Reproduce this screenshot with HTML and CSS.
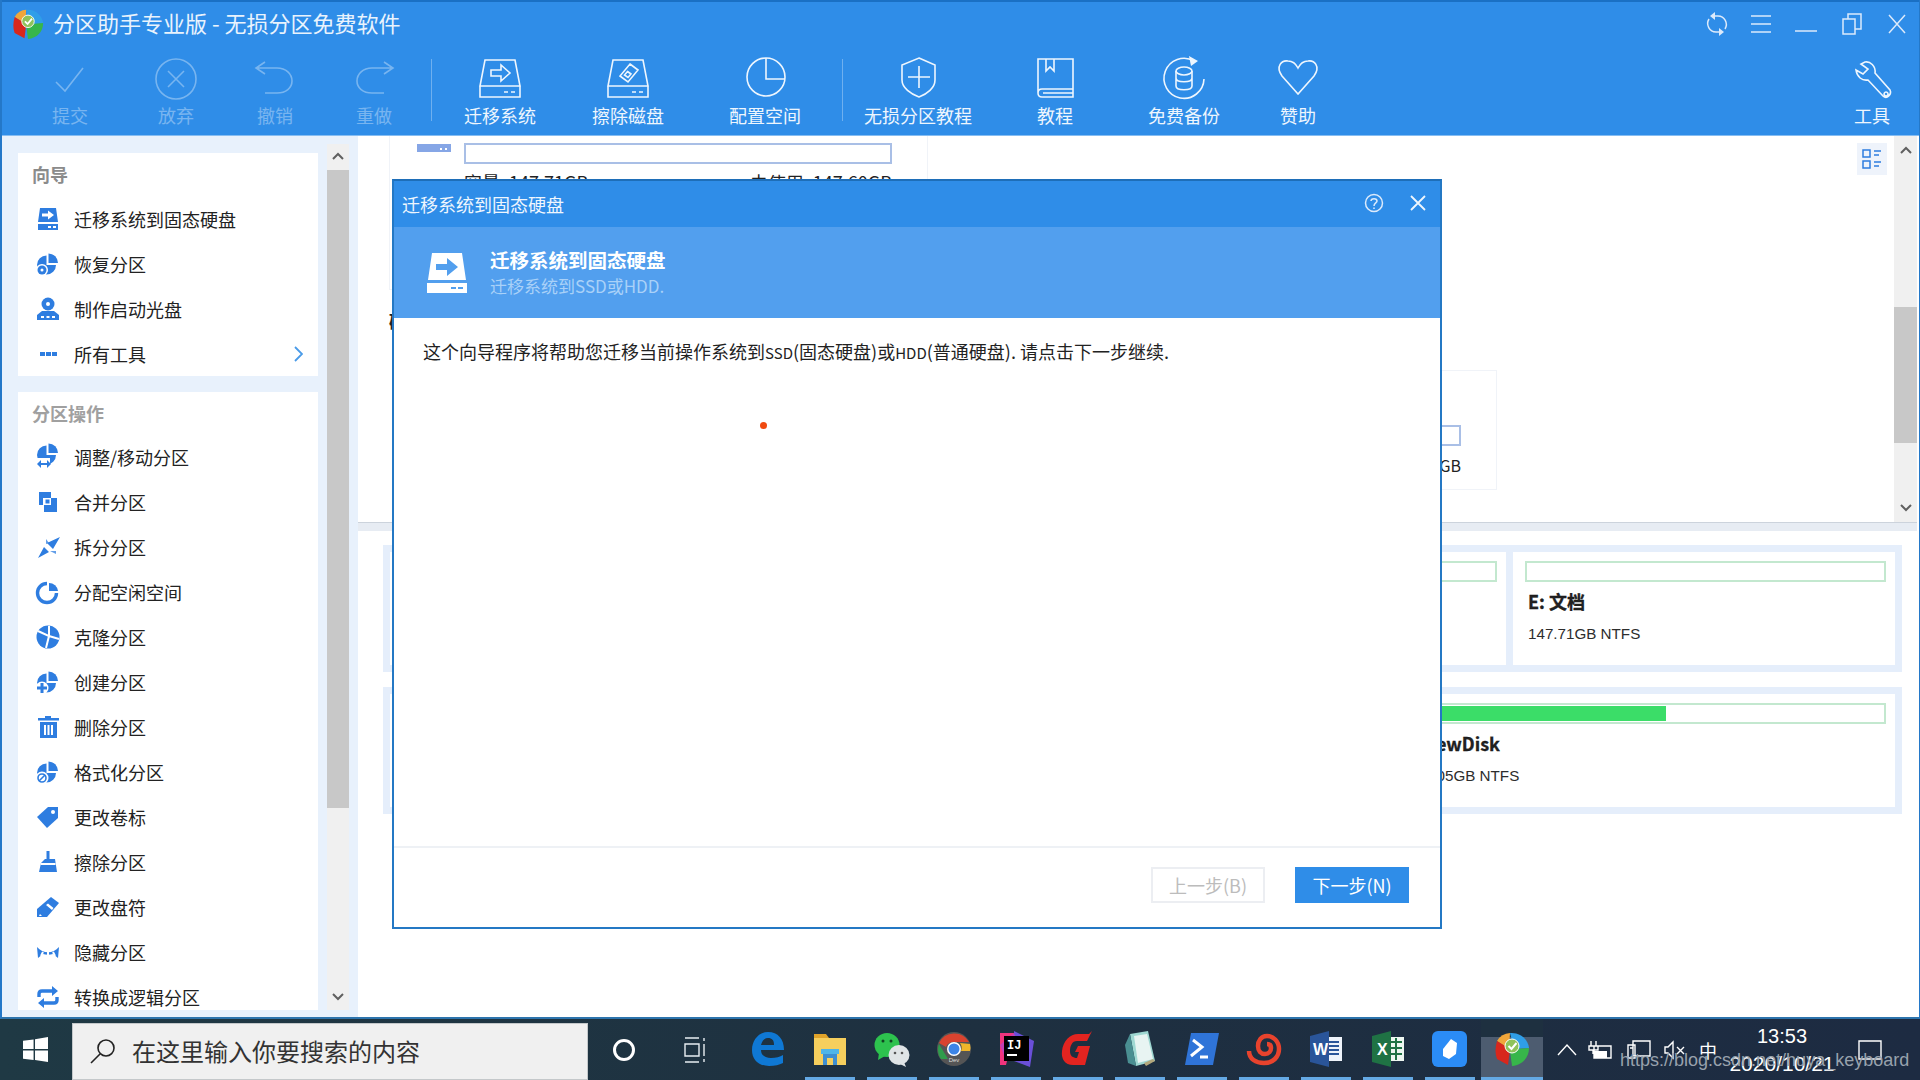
FILE: index.html
```html
<!DOCTYPE html>
<html lang="zh-CN">
<head>
<meta charset="utf-8">
<title>分区助手专业版</title>
<link rel="stylesheet" href="styles.css">
</head>
<body>
<svg class="defs" width="0" height="0" aria-hidden="true">
  <defs>
    <symbol id="pie" viewBox="0 0 24 24">
      <path d="M10.5 3.5A9.5 9.5 0 1 0 20 13H10.5Z"/>
      <path d="M12.5 1.5A9.5 9.5 0 0 1 22 11H12.5Z"/>
    </symbol>
    <symbol id="logo" viewBox="0 0 36 36">
      <path d="M16 2A16 16 0 0 0 3 10L15 18Z" fill="#f0a63a"/>
      <path d="M3 10C1 17 1 23 3 28L14 34L16 18Z" fill="#d8271c"/>
      <path d="M16 2C26 1 34 8 35 17L22 18L18 10Z" fill="#2f9ee8"/>
      <path d="M35 17C35 27 28 34 18 35L16 20L22 18Z" fill="#37b64a"/>
      <circle cx="18" cy="15" r="7" fill="#8fc35a" stroke="#fff" stroke-width="1"/>
      <path d="M14.500 15l3 3 5-6" fill="none" stroke="#fff" stroke-width="2"/>
    </symbol>
  </defs>
</svg>

<div class="window">
  <header class="titlebar">
    <svg class="app-logo" width="32" height="32"><use href="#logo"/></svg>
    <span class="app-title">分区助手专业版 - 无损分区免费软件</span>
    <div class="win-ctrls">
      <svg class="ctl ctl-sync" viewBox="0 0 24 24"><path d="M9 4H13A8.500 8.500 0 0 1 20 17M15 20H11A8.500 8.500 0 0 1 4 7"/><path class="ctl-solid" d="M10 0V8L5 4ZM14 16V24L19 20Z"/></svg>
      <svg class="ctl ctl-menu" viewBox="0 0 20 24"><path d="M0 4H20M0 12H20M0 20H20"/></svg>
      <svg class="ctl ctl-min" viewBox="0 0 22 24"><path d="M0 19H22"/></svg>
      <svg class="ctl ctl-restore" viewBox="0 0 20 24"><path d="M1 7H13V22H1ZM6 7V2H19V17H13"/></svg>
      <svg class="ctl ctl-close" viewBox="0 0 18 20"><path d="M1 1L17 19M17 1L1 19"/></svg>
    </div>
  </header>

  <nav class="toolbar">
    <div class="tool w106 off"><svg class="ti" viewBox="0 0 44 44"><path d="M8 26L17 35 35 12"/></svg><span>提交</span></div>
    <div class="tool w106 off"><svg class="ti" viewBox="0 0 44 44"><circle cx="22" cy="23" r="20"/><path d="M14 15L30 31M30 15L14 31"/></svg><span>放弃</span></div>
    <div class="tool w92 off"><svg class="ti" viewBox="0 0 44 44"><path d="M4 12H24C33 12 39 18 39 25S33 37 24 37H12M12 6L3 12L12 18" /></svg><span>撤销</span></div>
    <div class="tool w106 off"><svg class="ti" viewBox="0 0 44 44"><path d="M40 12H20C11 12 5 18 5 25S11 37 20 37H32M32 6L41 12L32 18"/></svg><span>重做</span></div>
    <i class="tool-sep"></i>
    <div class="tool w128"><svg class="ti" viewBox="0 0 44 44"><path d="M7 4H37L42 30H2ZM2 30H42V41H2ZM26 36H30M33 36H37M13 14H23V9L32 17L23 25V20H13Z"/></svg><span>迁移系统</span></div>
    <div class="tool w128"><svg class="ti" viewBox="0 0 44 44"><path d="M7 4H37L42 30H2ZM2 30H42V41H2ZM26 36H30M33 36H37M24 8L32 14L22 26L14 20ZM21.500 15.500L25 18L22 21.500L18.500 19Z"/></svg><span>擦除磁盘</span></div>
    <div class="tool w146"><svg class="ti" viewBox="0 0 44 44"><circle cx="23" cy="21" r="19"/><path d="M23 2V23H42"/></svg><span>配置空间</span></div>
    <i class="tool-sep"></i>
    <div class="tool w142"><svg class="ti" viewBox="0 0 44 44"><path d="M23 2L39 9V24C39 32 31 38 23 41C15 38 6 32 6 24V9ZM23 10V32M12 21H34"/></svg><span>无损分区教程</span></div>
    <div class="tool w132"><svg class="ti" viewBox="0 0 44 44"><path d="M5 3H40V41H9C6 41 5 39 5 37ZM5 37C5 34 6 33 9 33H40M10 37H40M13 3V15L17 11L21 15V3"/></svg><span>教程</span></div>
    <div class="tool w126"><svg class="ti" viewBox="0 0 44 44"><path d="M32 5A20 20 0 1 0 42 23"/><path class="solid" d="M27 0L36 5L29 10Z"/><ellipse cx="22" cy="15" rx="8" ry="4"/><path d="M14 15V30C14 35 30 35 30 30V15M14 22C14 27 30 27 30 22"/></svg><span>免费备份</span></div>
    <div class="tool w102"><svg class="ti" viewBox="0 0 44 44"><path d="M22 38L6 20C-1 10 6 4 12 5C17 5 20 8 22 12C24 8 27 5 32 5C38 4 45 10 38 20Z"/></svg><span>赞助</span></div>
    <div class="tool w94 tool-end"><svg class="ti" viewBox="0 0 44 44"><path d="M15 6C20 5 26 10 25 17L40 34C42 38 37 44 33 40L18 24C12 25 7 21 6 14L13 18L18 13L11 8ZM36 36a2 2 0 1 0 .1 0Z"/></svg><span>工具</span></div>
  </nav>

  <div class="content">
    <aside class="sidebar">
      <div class="side-panels">
        <section class="panel">
          <h3 class="panel-head">向导</h3>
          <div class="row"><svg class="si" viewBox="0 0 24 24"><path d="M4 1H20L22 15H2ZM2 17H22V23H2Z"/><path class="hole" d="M6 6.500H12V3.500L18 8 12 12.500V9.500H6ZM12 19H15V21H12ZM17 19H20V21H17Z"/></svg><span>迁移系统到固态硬盘</span></div>
          <div class="row"><svg class="si" viewBox="0 0 24 24"><use href="#pie"/><circle class="hole" cx="6" cy="18" r="6"/><circle cx="6" cy="18" r="4.500"/><circle class="hole" cx="6" cy="18" r="1.500"/></svg><span>恢复分区</span></div>
          <div class="row"><svg class="si" viewBox="0 0 24 24"><circle cx="12" cy="7" r="6.500"/><circle class="hole" cx="12" cy="7" r="2"/><path d="M6 14H18L23 18V23H1V18Z"/><path class="hole" d="M5 19H8V21H5ZM10.500 19H13.500V21H10.500ZM16 19H19V21H16Z"/></svg><span>制作启动光盘</span></div>
          <div class="row"><svg class="si" viewBox="0 0 24 24"><path d="M4 10H9V14H4ZM10 10H15V14H10ZM16 10H21V14H16Z"/></svg><span>所有工具</span><svg class="chev" viewBox="0 0 10 16"><path d="M2 1L9 8L2 15"/></svg></div>
        </section>
        <section class="panel panel-fill">
          <h3 class="panel-head soft">分区操作</h3>
          <div class="row"><svg class="si" viewBox="0 0 24 24"><use href="#pie" y="-3"/><rect class="hole" x="0" y="13" width="14" height="11"/><path d="M1 19L5 15V18H11V15L15 19L11 23V20H5V23Z"/></svg><span>调整/移动分区</span></div>
          <div class="row"><svg class="si" viewBox="0 0 24 24"><path d="M3 2H15V15H3Z"/><path class="hole" d="M7 8H21V22H7Z"/><path d="M8 8H21V22H8Z"/><path class="hole" d="M8 8H15V15H8Z"/><path d="M9.500 9.500H13.500V13.500H9.500Z"/></svg><span>合并分区</span></div>
          <div class="row"><svg class="si" viewBox="0 0 24 24"><path d="M2 23L8 12L13 17ZM24 2L17 14L11 8Z"/><path d="M10 4L13 8L10 9ZM14 16L20 16L20 19Z" opacity=".75"/></svg><span>拆分分区</span></div>
          <div class="row"><svg class="si" viewBox="0 0 24 24"><path class="ring" d="M11 3.500A9.500 9.500 0 1 0 20.500 13"/><path d="M13 3A9 9 0 0 1 22 11H13Z"/></svg><span>分配空闲空间</span></div>
          <div class="row"><svg class="si" viewBox="0 0 24 24"><circle cx="12" cy="12" r="11.500"/><path class="hole-line" d="M2 6L13 11L10 23M13 11L13 1M13 11L23 14"/></svg><span>克隆分区</span></div>
          <div class="row"><svg class="si" viewBox="0 0 24 24"><use href="#pie"/><circle class="hole" cx="6" cy="18" r="6.500"/><path d="M4.500 13H7.500V16.500H11V19.500H7.500V23H4.500V19.500H1V16.500H4.500Z"/></svg><span>创建分区</span></div>
          <div class="row"><svg class="si" viewBox="0 0 24 24"><path d="M9 1H15V3H23V5.500H2V3H9ZM4 7H21V23H4Z"/><path class="hole" d="M8 10H10V20H8ZM11.500 10H13.500V20H11.500ZM15 10H17V20H15Z"/></svg><span>删除分区</span></div>
          <div class="row"><svg class="si" viewBox="0 0 24 24"><use href="#pie"/><circle class="hole" cx="6" cy="18" r="6.500"/><circle class="ring3" cx="6" cy="18" r="4"/><path class="ring3" d="M3 21L9 15"/></svg><span>格式化分区</span></div>
          <div class="row"><svg class="si" viewBox="0 0 24 24"><path d="M12 2H22V13L11 23L1 12Z"/><circle class="hole" cx="17" cy="7" r="2"/></svg><span>更改卷标</span></div>
          <div class="row"><svg class="si" viewBox="0 0 24 24"><path d="M10.500 1H13.500V9H19L21 22H3L5 13L9 9H10.500Z"/><path class="hole" d="M5 13H19.500V15H4.500Z"/></svg><span>擦除分区</span></div>
          <div class="row"><svg class="si" viewBox="0 0 24 24"><path d="M15 2L23 8L11 22H1V14Z"/><path class="hole" d="M10 10L12 8.500L17.500 13L16 15ZM4 19L6 21H3Z"/></svg><span>更改盘符</span></div>
          <div class="row"><svg class="si" viewBox="0 0 24 24"><path d="M1 7C7 14 17 14 23 7L22 18L17 14C14 15 10 15 7 14L2 18Z"/><path class="hole-line" d="M12 12V17M7 12L5 16M17 12L19 16"/></svg><span>隐藏分区</span></div>
          <div class="row"><svg class="si" viewBox="0 0 24 24"><path class="ring" d="M3 12V9C3 7 4 6 6 6H19M21 12V15C21 17 20 18 18 18H5"/><path d="M16 1L22 6L16 11ZM8 13L2 18L8 23Z"/></svg><span>转换成逻辑分区</span></div>
        </section>
      </div>
      <div class="vscroll vscroll-side">
        <svg class="sb-arrow" viewBox="0 0 12 8"><path d="M1 7L6 2L11 7"/></svg>
        <div class="sb-thumb thumb-side"></div>
        <svg class="sb-arrow sb-end" viewBox="0 0 12 8"><path d="M1 1L6 6L11 1"/></svg>
      </div>
    </aside>

    <main class="main">
      <div class="upper">
        <div class="upper-content">
          <div class="part-card first">
            <div class="mini-disk"></div>
            <div class="part-info">
              <div class="bar bar-blue"></div>
              <div class="cap-row"><span>容量: 147.71GB</span><span>未使用: 147.60GB</span></div>
            </div>
          </div>
          <div class="disk-label">磁盘2</div>
          <div class="part-card second">
            <div class="part-info">
              <div class="bar bar-blue"></div>
              <div class="cap-row end"><span>未使用: 238.47GB</span></div>
            </div>
          </div>
        </div>
        <div class="view-col"><div class="view-btn"><svg viewBox="0 0 20 22"><path d="M1 2H8V9H1ZM1 13H8V20H1Z"/><path d="M12 3H19M12 7H17M12 14H19M12 18H17"/></svg></div></div>
        <div class="vscroll vscroll-main">
          <svg class="sb-arrow" viewBox="0 0 12 8"><path d="M1 7L6 2L11 7"/></svg>
          <div class="sb-thumb thumb-main"></div>
          <svg class="sb-arrow sb-end" viewBox="0 0 12 8"><path d="M1 1L6 6L11 1"/></svg>
        </div>
      </div>
      <div class="splitter"></div>
      <div class="lower">
        <div class="disk-card">
          <div class="vol vol-a"><div class="bar bar-green"></div><b>D: 软件</b><span>147.71GB NTFS</span></div>
          <div class="vol vol-b"><div class="bar bar-green"></div><b>E: 文档</b><span>147.71GB NTFS</span></div>
        </div>
        <div class="disk-card">
          <div class="vol vol-c"></div>
          <div class="vol vol-d"><div class="bar bar-green"><div class="fill"></div></div><b>F: NewDisk</b><span>238.05GB NTFS</span></div>
        </div>
      </div>
    </main>
  </div>
</div>

<footer class="taskbar">
  <svg class="win-logo" viewBox="0 0 26 26"><path d="M0 4L11 2.500V12.500H0ZM12.500 2.300L26 0V12.500H12.500ZM0 14H11V24L0 22.500ZM12.500 14H26V26L12.500 24Z"/></svg>
  <div class="search">
    <svg class="search-ic" viewBox="0 0 26 26"><circle cx="16" cy="10" r="8"/><path d="M10 16L1 25"/></svg>
    <span>在这里输入你要搜索的内容</span>
  </div>
  <svg class="cortana" viewBox="0 0 24 24"><circle cx="12" cy="12" r="9.500"/></svg>
  <svg class="taskview" viewBox="0 0 24 26"><path d="M1 1H15M1 7H15V19H1ZM1 25H15M20 1V4M20 7V19M20 22V25"/></svg>
  <div class="tasks">
    <div class="task plain"><svg viewBox="0 0 36 36"><path fill="#0f78d4" d="M18 1C28 1 34 8 34 19H11C11 25 16 27 21 27C26 27 30 26 33 24V32C29 34 25 35 19 35C9 35 2 29 2 19C2 9 9 1 18 1ZM11 14H24C24 9 22 7 18 7C14 7 12 10 11 14Z"/></svg></div>
    <div class="task"><svg viewBox="0 0 36 36"><path fill="#e0a32a" d="M2 3H14L17 7H2Z"/><path fill="#f6cf5d" d="M2 7H34V34H2Z"/><path fill="#3f8fd0" d="M11 20H25V34H21V27H15V34H11Z"/><path fill="#4fb5e8" d="M9 18H27V23H9Z"/></svg></div>
    <div class="task"><svg viewBox="0 0 36 36"><ellipse cx="13" cy="14" rx="12.500" ry="12" fill="#2dc24e"/><path d="M5 22L4 29L11 25Z" fill="#2dc24e"/><circle cx="9" cy="10" r="1.500" fill="#142"/><circle cx="17" cy="10" r="1.500" fill="#142"/><ellipse cx="25" cy="24" rx="10.500" ry="10" fill="#dfe4e6"/><path d="M30 31L32 36L26 33Z" fill="#dfe4e6"/><circle cx="21" cy="22" r="1.300" fill="#555"/><circle cx="28" cy="22" r="1.300" fill="#555"/></svg></div>
    <div class="task"><svg viewBox="0 0 36 36"><circle cx="18" cy="18" r="17" fill="#555"/><path d="M3 12A17 17 0 0 1 33 11H18C14 11 11 13 10 16Z" fill="#d9432f"/><path d="M3 13L12 28H5C2 24 1 18 3 13Z" fill="#2f9c4c"/><path d="M34 13A14 14 0 0 1 34 20H25A8 8 0 0 0 24 12Z" fill="#f0b62a"/><circle cx="18" cy="18" r="7" fill="#fff"/><circle cx="18" cy="18" r="5.500" fill="#3c84e6"/><text x="18" y="31" class="dev">Dev</text></svg></div>
    <div class="task"><svg viewBox="0 0 36 36"><path fill="#f0347d" d="M2 2H16L8 34H2Z"/><path fill="#6a4fd8" d="M16 0L36 10L32 36L16 30Z"/><path fill="#c33fb5" d="M2 14L16 2L20 14L8 30Z"/><rect x="6" y="5" width="25" height="25" fill="#000"/><text x="9" y="18" class="ij">IJ</text><rect x="9" y="23" width="10" height="2" fill="#fff"/></svg></div>
    <div class="task"><svg viewBox="0 0 36 36"><path fill="#e32420" d="M32 0L27 10H17C12 10 10 15 10 20C10 25 13 27 17 27L19 21H15L18 15H30L25 34H13C5 34 1 28 2 20C3 10 10 3 18 3H29Z"/></svg></div>
    <div class="task"><svg viewBox="0 0 36 36"><path fill="#9fd8d2" d="M8 3L26 0L33 30L14 35Z"/><path fill="#e8f4f2" d="M12 5L25 3L31 28L16 32Z"/><path fill="#b3a77b" d="M24 35L33 30L31 28L22 32Z"/><path d="M8 3L14 35L6 32L3 14Z" fill="#4a8f92"/></svg></div>
    <div class="task"><svg viewBox="0 0 36 36"><path fill="#2f74d8" d="M7 2H35L29 34H1Z"/><path d="M9 9L18 16L7 25" fill="none" stroke="#fff" stroke-width="3"/><path d="M16 26H24" stroke="#fff" stroke-width="3"/></svg></div>
    <div class="task"><svg viewBox="0 0 36 36"><path fill="none" stroke="#e8432d" stroke-width="4.500" d="M3 20C3 28 10 32 18 32C27 32 33 26 33 18C33 10 27 5 21 5C15 5 12 10 12 15C12 20 15 23 19 23C23 23 25 20 25 17C25 14 23 13 21 13"/></svg></div>
    <div class="task"><svg viewBox="0 0 36 36"><rect x="12" y="6" width="22" height="24" fill="#eef3fa"/><path d="M20 11H31M20 15H31M20 19H31M20 23H31" stroke="#2a5599" stroke-width="2"/><path fill="#2a5599" d="M2 5L21 0V36L2 31Z"/><text x="5" y="24" class="wx">W</text></svg></div>
    <div class="task"><svg viewBox="0 0 36 36"><rect x="12" y="6" width="22" height="24" fill="#eef7f1"/><path d="M21 11H32M21 17H32M21 23H32M26 7V29" stroke="#1f7244" stroke-width="2"/><path fill="#1f7244" d="M2 5L21 0V36L2 31Z"/><text x="7" y="24" class="wx">X</text></svg></div>
    <div class="task"><svg viewBox="0 0 36 36"><rect width="35" height="36" rx="6" fill="#2b8cf6"/><path fill="#fff" d="M19 8L25 12L24 23L17 28L11 25V18Z"/></svg></div>
    <div class="task active"><svg viewBox="0 0 36 36"><use href="#logo"/></svg></div>
  </div>
  <div class="tray">
    <svg class="tray-ic" viewBox="0 0 20 20"><path d="M1 15L10 5L19 15"/></svg>
    <svg class="tray-ic tray-power" viewBox="0 0 24 20"><path d="M3 1V6M8 1V6M1 6H10V10H1ZM5 10V14M6 6H23V18H6Z"/><path class="tray-fill" d="M6 11H19V18H6Z"/></svg>
    <svg class="tray-ic" viewBox="0 0 24 20"><path d="M6 1H23V16H6ZM1 5H8V18H1ZM3 8H6"/></svg>
    <svg class="tray-ic" viewBox="0 0 22 20"><path d="M1 7H4L9 2V18L4 13H1ZM13 7L20 14M20 7L13 14"/></svg>
    <span class="tray-ime">中</span>
    <div class="clock"><span>13:53</span><span class="date">2020/10/21</span></div>
    <svg class="notify" viewBox="0 0 24 20"><path d="M1 1H23V19H1Z"/></svg>
  </div>
  <span class="watermark">https://blog.csdn.net/huya_keyboard</span>
</footer>

<section class="dialog">
  <div class="dlg-title">
    <span>迁移系统到固态硬盘</span>
    <svg class="dlg-help" viewBox="0 0 20 20"><circle cx="10" cy="10" r="8.500"/><path d="M7 8C7 5 13 5 13 8C13 10 10 10 10 13"/><path d="M10 14.500V16"/></svg>
    <svg class="dlg-close" viewBox="0 0 18 18"><path d="M2 2L16 16M16 2L2 16"/></svg>
  </div>
  <div class="dlg-head">
    <svg class="dlg-ic" viewBox="0 0 44 40"><path d="M7 0H37L41 27H3ZM2 30H42V40H2Z"/><path class="dlg-hole" d="M11 11H22V5L33 14L22 23V17H11ZM26 34H31V36H26ZM33 34H38V36H33Z"/></svg>
    <div class="dlg-head-text"><strong>迁移系统到固态硬盘</strong><span>迁移系统到SSD或HDD.</span></div>
  </div>
  <div class="dlg-body">
    <p>这个向导程序将帮助您迁移当前操作系统到<small>SSD</small>(固态硬盘)或<small>HDD</small>(普通硬盘). 请点击下一步继续.</p>
    <i class="dot"></i>
  </div>
  <div class="dlg-foot">
    <button class="btn btn-off">上一步(B)</button>
    <button class="btn btn-on">下一步(N)</button>
  </div>
</section>
</body>
</html>
```
FILE: styles.css
```css
* { box-sizing: border-box; }
html, body { margin: 0; padding: 0; width: 1920px; height: 1080px; overflow: hidden; }
body { font-family: "Noto Sans CJK SC", "Liberation Sans", sans-serif; font-size: 18px; color: #222; background: #fff; position: relative; }
.defs { position: absolute; }
svg { display: block; flex: none; }

.window { height: 1019px; display: flex; flex-direction: column; border-left: 2px solid #2478c8; border-right: 1px solid #2478c8; border-bottom: 2px solid #2d74ad; }

.titlebar { height: 46px; flex: none; background: #2f8de8; border-top: 2px solid #1a70c4; display: flex; align-items: center; padding-left: 10px; color: #fff; }
.app-logo { margin-right: 9px; }
.app-title { font-size: 22px; line-height: 40px; margin-bottom: 4px; color: #e9f3fd; }
.win-ctrls { margin-left: auto; display: flex; align-items: center; }
.ctl { fill: none; stroke: #dceafb; stroke-width: 1.5; height: 24px; }
.ctl-solid { fill: #dceafb; stroke: none; }
.ctl-sync { width: 24px; margin-right: 22px; }
.ctl-menu { width: 20px; margin-right: 24px; }
.ctl-min { width: 22px; margin-right: 25px; }
.ctl-restore { width: 20px; margin-right: 26px; }
.ctl-close { width: 18px; height: 20px; margin-right: 13px; }

.toolbar { height: 90px; flex: none; background: #2f8de8; border-bottom: 1px solid #86bdf2; display: flex; padding-left: 15px; }
.tool { display: flex; flex-direction: column; align-items: center; padding-top: 10px; color: #eef6fe; font-size: 18px; line-height: 24px; flex: none; }
.tool span { margin-top: 3px; white-space: nowrap; }
.ti { width: 44px; height: 44px; fill: none; stroke: #eef6fe; stroke-width: 1.6; overflow: visible; }
.ti .solid { fill: #eef6fe; stroke: none; }
.off { opacity: .38; }
.w92 { width: 92px; } .w94 { width: 94px; } .w102 { width: 102px; } .w106 { width: 106px; } .w126 { width: 126px; }
.w128 { width: 128px; } .w132 { width: 132px; } .w142 { width: 142px; } .w146 { width: 146px; }
.tool-end { margin-left: auto; }
.tool-sep { width: 1px; height: 62px; margin: 13px 4px 0; background: #6fb0ef; flex: none; }

.content { flex: 1; min-height: 0; display: flex; }
.sidebar { width: 356px; flex: none; background: #e8f1fc; display: flex; padding-bottom: 7px; }
.side-panels { width: 300px; margin-left: 16px; padding-top: 17px; display: flex; flex-direction: column; gap: 16px; overflow: hidden; flex: none; }
.panel { background: #fff; flex: none; }
.panel-fill { flex: 1; min-height: 0; overflow: hidden; }
.panel-head { margin: 0; height: 43px; padding-left: 14px; font-size: 18px; line-height: 42px; font-weight: 700; color: #8b8b8b; }
.panel-head.soft { height: 42px; line-height: 43px; color: #a0a0a0; }
.row { height: 45px; display: flex; align-items: center; padding-left: 18px; gap: 14px; font-size: 18px; color: #222; white-space: nowrap; }
.si { width: 24px; height: 24px; fill: #2e7de0; overflow: visible; }
.si .hole { fill: #fff; }
.si .hole-line { fill: none; stroke: #fff; stroke-width: 2; }
.si .ring { fill: none; stroke: #2e7de0; stroke-width: 3.4; }
.si .ring3 { fill: none; stroke: #2e7de0; stroke-width: 1.6; }
.chev { width: 10px; height: 16px; margin-left: auto; margin-right: 15px; fill: none; stroke: #4a9be8; stroke-width: 1.8; }

.vscroll { background: #f0f0f0; display: flex; flex-direction: column; align-items: center; flex: none; }
.vscroll-side { width: 22px; margin: 8px 0 0 9px; padding-top: 8px; }
.vscroll-main { width: 23px; margin-right: 2px; padding-top: 10px; padding-bottom: 10px; }
.sb-arrow { width: 12px; height: 8px; fill: none; stroke: #606060; stroke-width: 2; }
.sb-end { margin-top: auto; }
.vscroll-side .sb-end { margin-bottom: 9px; }
.sb-thumb { width: 100%; background: #c8c8c8; flex: none; }
.thumb-side { height: 638px; margin-top: 10px; }
.thumb-main { height: 136px; margin-top: 153px; }

.main { flex: 1; min-width: 0; display: flex; flex-direction: column; }
.upper { height: 386px; flex: none; display: flex; overflow: hidden; }
.upper-content { flex: 1; min-width: 0; padding-left: 31px; margin-top: -40px; }
.part-card { border: 1px solid #f0f3f8; background: #fff; display: flex; }
.first { width: 539px; height: 194px; padding: 46px 35px 0 27px; gap: 13px; }
.mini-disk { width: 34px; height: 8px; margin-top: 1px; background: radial-gradient(circle at 24px 5px, #fff 1px, transparent 1.500px), radial-gradient(circle at 29px 5px, #fff 1px, transparent 1.500px), #86a6e6; }
.part-info { flex: 1; min-width: 0; }
.bar { height: 21px; border: 2px solid #c3e8cf; background: #fff; }
.bar-blue { border-color: #a9bfe6; }
.cap-row { display: flex; justify-content: space-between; margin-top: 6px; font-size: 18px; line-height: 24px; white-space: nowrap; }
.cap-row.end { justify-content: flex-end; font-size: 16px; margin-top: 7px; }
.disk-label { height: 24px; margin-top: 19px; font-size: 18px; line-height: 24px; font-weight: 700; }
.second { width: 500px; height: 120px; margin: 37px 0 0 608px; padding: 54px 35px 0 20px; }

.view-col { width: 30px; flex: none; margin-right: 7px; padding-top: 7px; }
.view-btn { width: 30px; height: 32px; background: #eef3fb; display: flex; align-items: center; justify-content: center; }
.view-btn svg { width: 20px; height: 22px; fill: none; stroke: #2e7de0; stroke-width: 1.5; }

.splitter { height: 9px; flex: none; background: #e7ecf3; border-top: 1px solid #ccd3dc; margin-right: 2px; }
.lower { flex: 1; padding: 14px 0 0 25px; display: flex; flex-direction: column; gap: 15px; }
.disk-card { width: 1519px; height: 127px; border: 7px solid #e5eefb; background: #e5eefb; display: flex; gap: 7px; }
.vol { background: #fff; padding: 9px 9px 0 12px; display: flex; flex-direction: column; align-items: flex-start; min-width: 0; }
.vol .bar { width: 100%; flex: none; margin-bottom: 5px; padding: 1px; }
.vol b { font-size: 18px; line-height: 26px; margin: 1px 0 0 3px; white-space: nowrap; -webkit-text-stroke: .3px #111; }
.vol span { font-size: 15.200px; line-height: 24px; margin: 8px 0 0 3px; white-space: nowrap; color: #2d2d2d; font-family: "Liberation Sans", sans-serif; }
.vol-a { width: 1116px; }
.vol-b { flex: 1; }
.vol-c { width: 990px; }
.vol-d { flex: 1; }
.vol-d span { margin-left: 8px; }
.fill { width: 54.800%; height: 100%; background: #3bdd68; }

.taskbar { height: 61px; display: flex; align-items: center; background: linear-gradient(90deg, #1f3944, #1e3040 50%, #1d2b42); color: #fff; position: relative; }
.win-logo { width: 25px; height: 25px; margin-left: 23px; fill: #fff; }
.search { width: 516px; height: 57px; margin-left: 24px; background: #f0f0f0; border: 1px solid #c4c8ca; display: flex; align-items: center; padding: 0 0 2px 17px; gap: 16px; color: #333; font-size: 24px; align-self: flex-end; }
.search-ic { width: 26px; height: 26px; fill: none; stroke: #222; stroke-width: 1.6; }
.cortana { width: 24px; height: 24px; margin-left: 24px; fill: none; stroke: #fff; stroke-width: 3; }
.taskview { width: 24px; height: 26px; margin-left: 48px; fill: none; stroke: #e8eef2; stroke-width: 1.4; }
.tasks { display: flex; margin-left: 29px; height: 100%; }
.task { width: 62px; height: 100%; padding-top: 12px; display: flex; justify-content: center; position: relative; }
.task svg { width: 36px; height: 36px; }
.task::after { content: ""; position: absolute; left: 6px; right: 6px; bottom: 0; height: 3px; background: #64a9e4; }
.task.plain::after { display: none; }
.task.active { background: linear-gradient(#1e3040 0 30%, #4d5c70 30%); }
.task.active::after { left: 0; right: 0; }
.dev { font-size: 6px; fill: #ddd; text-anchor: middle; font-family: "Liberation Sans", sans-serif; }
.ij { font-size: 12px; font-weight: 700; fill: #fff; font-family: "Liberation Mono", monospace; }
.wx { font-size: 16px; font-weight: 700; fill: #fff; font-family: "Liberation Sans", sans-serif; }

.tray { display: flex; align-items: center; margin-left: 6px; height: 100%; }
.tray-ic { width: 24px; height: 20px; margin: 0 6px; fill: none; stroke: #fff; stroke-width: 1.4; }
.tray-power { margin: 0 9px 0 3px; }
.tray-fill { fill: #fff; stroke: none; }
.tray-ime { width: 36px; margin-left: -3px; text-align: center; font-size: 18px; color: #fff; }
.clock { width: 112px; display: flex; flex-direction: column; align-items: center; font-family: "Liberation Sans", sans-serif; font-size: 20px; line-height: 28px; }
.clock .date { font-size: 21px; }
.notify { width: 24px; height: 20px; margin-left: 20px; fill: none; stroke: #fff; stroke-width: 1.4; }
.watermark { position: absolute; left: 1620px; top: 30px; font-family: "Liberation Sans", sans-serif; font-size: 18px; line-height: 22px; color: #98a2ad; white-space: nowrap; }

.dialog { position: absolute; left: 392px; top: 179px; width: 1050px; height: 750px; background: #fff; border: 2px solid #2478c4; border-top-color: #1e6eb8; display: flex; flex-direction: column; }
.dlg-title { height: 46px; flex: none; background: #2f8de8; color: #eef6fe; display: flex; align-items: center; padding-left: 8px; font-size: 18px; }
.dlg-help { width: 20px; height: 20px; margin: 0 0 3px auto; fill: none; stroke: #dceafb; stroke-width: 1.5; }
.dlg-close { width: 18px; height: 18px; margin: 0 13px 3px 25px; fill: none; stroke: #eef6fe; stroke-width: 1.8; }
.dlg-head { height: 91px; flex: none; background: #529fee; display: flex; align-items: center; padding-left: 31px; gap: 21px; color: #fff; }
.dlg-ic { width: 44px; height: 40px; fill: #fff; }
.dlg-hole { fill: #529fee; }
.dlg-head-text { display: flex; flex-direction: column; margin-top: -1px; }
.dlg-head-text strong { font-size: 19.500px; line-height: 26px; font-weight: 700; }
.dlg-head-text span { font-size: 17px; line-height: 25px; color: #a9d1f8; }
.dlg-body { flex: 1; position: relative; padding: 20px 0 0 29px; }
.dlg-body p { margin: 0; font-size: 18px; line-height: 26px; color: #222; white-space: nowrap; }
.dlg-body small { font-size: 15px; }
.dot { position: absolute; left: 366px; top: 104px; width: 7px; height: 7px; border-radius: 50%; background: #f04a10; }
.dlg-foot { height: 81px; flex: none; border-top: 2px solid #eef1f5; display: flex; justify-content: flex-end; padding: 19px 31px 0 0; gap: 30px; align-items: flex-start; }
.btn { width: 114px; height: 36px; padding: 0; font-family: inherit; font-size: 18px; line-height: 30px; }
.btn-off { background: #fff; border: 2px solid #eceef2; color: #bcbcbc; }
.btn-on { background: #2f8de8; border: 0; color: #fff; }
```
